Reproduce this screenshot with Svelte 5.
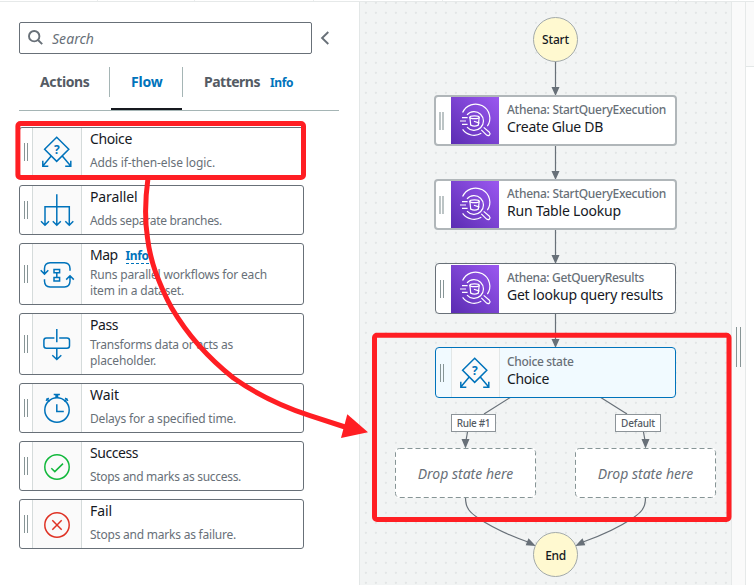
<script>
  const states = [
    { id: 'choice', title: 'Choice', tw: 42, lines: [['Adds if-then-else logic.', 125]] },
    { id: 'parallel', title: 'Parallel', tw: 47.5, lines: [['Adds separate branches.', 132]] },
    { id: 'map', title: 'Map', tw: 27.5, info: true, lines: [['Runs parallel workflows for each', 177], ['item in a dataset.', 94]] },
    { id: 'pass', title: 'Pass', tw: 28, lines: [['Transforms data or acts as', 143], ['placeholder.', 66]] },
    { id: 'wait', title: 'Wait', tw: 29, lines: [['Delays for a specified time.', 146]] },
    { id: 'success', title: 'Success', tw: 48, lines: [['Stops and marks as success.', 151]] },
    { id: 'fail', title: 'Fail', tw: 22, lines: [['Stops and marks as failure.', 146]] }
  ];

  const nodes = [
    { id: 'athena', x: 74, y: 95, w: 243, soft: true, sub: 'Athena: StartQueryExecution', sw: 159, title: 'Create Glue DB', tw: 96 },
    { id: 'athena', x: 74, y: 179, w: 243, soft: true, sub: 'Athena: StartQueryExecution', sw: 159, title: 'Run Table Lookup', tw: 114 },
    { id: 'athena', x: 75, y: 263, w: 241, sub: 'Athena: GetQueryResults', sw: 137, title: 'Get lookup query results', tw: 156 },
    { id: 'choice', x: 75, y: 347, w: 241, active: true, sub: 'Choice state', sw: 66.5, title: 'Choice', tw: 42 }
  ];

  // Tracks a text run so that it spans the given width.
  function fit(el, width) {
    const natural = el.getBoundingClientRect().width;
    el.style.letterSpacing = `${(width - natural) / el.textContent.length}px`;
  }
</script>

{#snippet icon(id)}
  <svg class="icon {id}" viewBox="0 0 48 48" width="48" height="48">
    {#if id === 'choice'}
      <path d="M23.7 9.2 35.8 21.3 23.7 33.4 11.6 21.3ZM18.2 28 9.8 38M9.8 32.8V38.2H15.3M29.3 28 37.7 38M37.8 32.8V38.2H32.2" />
      <text x="23.8" y="25.5" text-anchor="middle">?</text>
    {:else if id === 'parallel'}
      <path d="M23.8 8.3V39.3M12 39V20.8H36.3V39M8 35.3 12 39.3 16 35.3M19.8 35.3 23.8 39.3 27.8 35.3M32.3 35.3 36.3 39.3 40.3 35.3" />
    {:else if id === 'map'}
      <path d="M11.5 24V18.5Q11.7 13 17 12.8H31.5Q36.8 13 37 18.5V20.7M7.7 20.3 11.5 24.1 15.3 20.3M37 26V31.3Q36.8 36.8 31.5 37H17Q11.7 36.8 11.5 31.3V29.3M33.2 29.6 37 25.8 40.8 29.6M21 19.5H26.6V22.8H21ZM21 27.6H26.6V31H21ZM23.8 22.8V27.6" />
    {:else if id === 'pass'}
      <path d="M23.8 9V22.3M21.4 18H13.4Q10.9 18 10.9 20.5V25.8Q10.9 28.3 13.4 28.3H34Q36.5 28.3 36.5 25.8V20.5Q36.5 18 34 18H26.2M23.8 28.3V39.5M19.3 35.2 23.8 39.5 28.3 35.2" />
    {:else if id === 'wait'}
      <circle cx="24" cy="26" r="12.2" />
      <path d="M23.8 20.3V27.4H30.8M20.7 10.4H26.9M13 16.7 15.7 14M32.2 14 35 16.7" />
      <path d="M23.8 10V14" stroke-width="3" />
      <path d="M13.5 14.5 16.5 17.5M34.4 14.5 31.4 17.5" />
    {:else if id === 'success'}
      <circle cx="24" cy="25" r="12.2" />
      <path d="M18.3 26.3 21.8 29.6 30 21.6" />
    {:else if id === 'fail'}
      <circle cx="24" cy="25" r="12.2" />
      <path d="M19.3 20.3 28.7 29.7M28.7 20.3 19.3 29.7" />
    {:else}
      <defs>
        <linearGradient id="violet" x1="0" y1="1" x2="1" y2="0">
          <stop offset="0" stop-color="#5a2cb2" />
          <stop offset="1" stop-color="#9b58f0" />
        </linearGradient>
      </defs>
      <rect width="48" height="48" fill="url(#violet)" stroke="none" />
      <path d="M11.6 15.6A14.2 14.2 0 1 1 36.4 29.2M11.6 32.4A14.2 14.2 0 0 0 30.3 36.3" />
      <path d="M16 17.8A9.4 9.4 0 1 1 16 30.2" />
      <path d="M11 20.6H16.6M9 24H15M11 27.4H16.6" />
      <path d="M18.9 20.3 19.7 28.1Q23.5 30 27.3 28.1L28.2 20.3M22.9 24.2 28.6 26.1" />
      <ellipse cx="23.5" cy="20.2" rx="4.8" ry="1.4" />
      <path d="M30.3 32.8 35.6 38.1Q37.2 39.3 38.5 38Q39.7 36.6 38.4 35.3L32.7 30.4" />
    {/if}
  </svg>
{/snippet}

<div class="app">
  <header class="strip"><i></i><i></i><i></i><i></i><i></i><i></i></header>
  <div class="body">
    <aside>
      <div class="searchrow">
        <div class="search">
          <svg width="16" height="16" viewBox="0 0 16 16"><circle cx="6.2" cy="6.2" r="5.2" /><path d="M10 10 14.2 14.2" /></svg>
          <span use:fit={42}>Search</span>
        </div>
        <svg class="chev" width="9" height="14" viewBox="0 0 9 14"><path d="M8.3 1 2.1 7 8.3 13" /></svg>
      </div>
      <nav>
        <div class="tab first"><span use:fit={49.5}>Actions</span></div>
        <div class="tab on"><span use:fit={31.5}>Flow</span></div>
        <div class="tab last"><span use:fit={56}>Patterns</span><small use:fit={23}>Info</small></div>
      </nav>
      <div class="list">
        {#each states as s}
          <article class:tall={s.lines.length > 1}>
            <div class="grip"><b></b></div>
            <div class="iconcol">{@render icon(s.id)}</div>
            <div class="copy">
              <h3><span use:fit={s.tw}>{s.title}</span>{#if s.info}<a><span use:fit={23}>Info</span></a>{/if}</h3>
              <div class="desc">
                {#each s.lines as [text, width]}
                  <p><span use:fit={width}>{text}</span></p>
                {/each}
              </div>
            </div>
          </article>
        {/each}
      </div>
    </aside>

    <main>
      <svg class="edges" width="371" height="585" viewBox="360 0 371 585">
        <path d="M555.5 61V90M555.5 145V174M555.5 229V258M555.5 313V342M511 397 484 414M600 397 627 414M467.7 431 465.9 441M643.3 431 645.1 441" />
        <path d="M465.5 498C465.5 509 471 513 478 518C490 526 508 535 528 542M645.5 498C645.5 509 640 513 633 518C621 526 603 535 583 542" />
        <path class="head" d="M551.5 87H559.5L555.5 96ZM551.5 171H559.5L555.5 180ZM551.5 255H559.5L555.5 264ZM551.5 339H559.5L555.5 348ZM461.5 439H469.5L465.5 448.5ZM641.5 439H649.5L645.5 448.5ZM528.5 538.2 525.7 545.3 535.8 546ZM582.5 538.2 585.3 545.3 575.2 546Z" />
      </svg>
      <div class="terminal start"><span use:fit={27}>Start</span></div>
      {#each nodes as n}
        <div class="node" class:soft={n.soft} class:active={n.active} style="left:{n.x}px;top:{n.y}px;width:{n.w}px">
          <div class="grip"><b></b></div>
          <div class="nodeicon">{@render icon(n.id)}</div>
          <div class="nodecopy">
            <p><span use:fit={n.sw}>{n.sub}</span></p>
            <h3><span use:fit={n.tw}>{n.title}</span></h3>
          </div>
        </div>
      {/each}
      <div class="tag rule"><span use:fit={33.5}>Rule #1</span></div>
      <div class="tag default"><span use:fit={34}>Default</span></div>
      {#each [35, 215] as left}
        <div class="drop" style="left:{left}px">
          <svg width="141" height="50"><rect x=".5" y=".5" width="140" height="49" rx="4" /></svg>
          <span use:fit={95.5}>Drop state here</span>
        </div>
      {/each}
      <div class="terminal end"><span use:fit={20.5}>End</span></div>
    </main>
    <div class="resize"><b></b></div>
    <div class="inspector"><div></div></div>
  </div>

  <svg class="marks" width="754" height="585">
    <rect x="17.9" y="123.5" width="285.6" height="54" rx="2.5" />
    <rect x="374.5" y="335.2" width="354.5" height="184.3" rx="2.5" />
    <path d="M148 178C145 200 145 222 147.5 238C149 250 152 262 155.5 272C160 284 165 296 171.7 308C187 334 207 357 233.5 378C256 394 281 406 310 415.7L345 427" />
    <path class="tip" d="M347.3 414.3 368 432.3 341 438Z" />
  </svg>
</div>

<style>
  :global(body) { background: #fff; overflow: hidden; }
  .app { position: relative; display: flex; flex-direction: column; width: 754px; height: 585px; overflow: hidden; font-family: "Noto Sans", "Open Sans", sans-serif; color: #16191f; }
  svg { display: block; fill: none; overflow: visible; }
  h3, p { margin: 0; font-weight: 400; }
  span, small { white-space: nowrap; }

  .strip { display: grid; grid-template-columns: 98px 97px 119px 129px 108px 128px; height: 1px; flex: none; border-bottom: 1px solid #e6e9e9; }
  .strip i { border-right: 1px solid #eaeded; }
  .body { display: flex; flex: 1; min-height: 0; }

  aside { box-sizing: border-box; width: 360px; flex: none; padding: 20px 20px 0 19px; border-right: 1px solid #e3e7e7; }
  .searchrow { display: flex; align-items: center; gap: 8px; }
  .search { box-sizing: border-box; display: flex; align-items: center; gap: 8px; width: 293px; height: 32px; padding: 0 8px; border: 1px solid #687078; border-radius: 2px; color: #687078; font-size: 14px; font-style: italic; }
  .search svg, .chev { stroke: #687078; stroke-width: 1.9; }
  nav { box-sizing: border-box; display: flex; height: 57px; padding-top: 13px; border-bottom: 1px solid #a5b5b5; width: 320px; color: #545b64; font-size: 14px; font-weight: 700; }
  .tab { position: relative; display: flex; align-items: center; height: 30px; box-sizing: border-box; line-height: 20px; }
  .tab.first { width: 91px; padding-left: 21px; border-right: 1px solid #a5b5b5; }
  .tab.on { width: 73px; padding-left: 21px; color: #0073bb; border-right: 1px solid #a5b5b5; }
  .tab.on::after { content: ""; position: absolute; left: 1px; right: 0; top: 41px; height: 2px; background: #16191f; }
  .tab.last { padding-left: 21px; gap: 10px; }
  .tab small { color: #0073bb; font-size: 12px; padding-top: 2px; }

  .list { display: flex; flex-direction: column; gap: 8px; margin-top: 16px; width: 285px; }
  article { box-sizing: border-box; display: flex; height: 50px; border: 1px solid #687078; border-radius: 3px; overflow: hidden; background: #fff; }
  article.tall { height: 62px; }
  .grip { width: 12px; flex: none; display: flex; align-items: center; justify-content: center; }
  .grip b { width: 2px; height: 18px; border: solid #879596; border-width: 0 1px; }
  .iconcol { width: 48px; flex: none; display: flex; align-items: center; background: #fafafa; border: solid #d5dbdb; border-width: 0 1px; }
  .icon { stroke: #0073bb; stroke-width: 1.5; flex: none; }
  .icon text { fill: #0073bb; stroke: none; font-size: 12px; font-weight: 700; }
  .icon.success { stroke: #12b83c; }
  .icon.fail { stroke: #df3325; }
  .icon.athena { stroke: #fff; stroke-width: 1.2; }
  .copy { padding-left: 8px; }
  .copy h3 { display: flex; align-items: baseline; gap: 8px; height: 22px; font-size: 14px; line-height: 22px; }
  .copy a { color: #0073bb; font-size: 12px; font-weight: 700; line-height: 14px; border-bottom: 1px dashed #0073bb; }
  .desc { padding-top: 5px; font-size: 12px; line-height: 16px; font-weight: 500; color: #687078; }
  .tall .desc { padding-top: 1px; }

  main { position: relative; width: 371px; flex: none; background: #f2f4f4 radial-gradient(circle at 5.8px 5.7px, #e3e6e6 0.8px, transparent 1.4px) 0 5px / 10px 10px; }
  .edges { position: absolute; left: 0; top: -2px; stroke: #687078; stroke-width: 1.2; }
  .edges .head { fill: #687078; stroke: none; }
  .terminal { position: absolute; box-sizing: border-box; left: 173px; width: 45px; height: 45px; display: flex; align-items: center; justify-content: center; padding-top: 1px; border: 1px solid #a3aaaa; border-radius: 50%; background: #fff9d0; font-size: 12px; font-weight: 500; color: #16191f; }
  .start { top: 14.5px; }
  .end { top: 530px; }
  .node { position: absolute; box-sizing: border-box; display: flex; height: 51px; margin-top: -2px; border: 1px solid #687078; border-radius: 4px; overflow: hidden; background: #fff; }
  .node.soft { border-width: 2px; border-color: #b0b6b9; }
  .node .grip { width: 15px; justify-content: flex-start; padding-left: 4px; box-sizing: border-box; }
  .node.soft .grip { padding-left: 3px; }
  .node.soft .grip b { border-color: #bcc4c5; border-width: 0 2px; width: 1px; }
  .node.active { border-color: #0073bb; background: #f1faff; }
  .nodeicon { width: 48px; flex: none; display: flex; align-items: center; }
  .active .nodeicon { box-sizing: border-box; width: 49px; background: #fafafa; border: solid #e3e7e7; border-width: 0 1px; }
  .active .nodeicon .icon { margin-left: -1px; }
  .nodecopy { padding: 5px 0 0 8px; }
  .soft .nodecopy { padding-top: 4px; }
  .active .nodecopy { padding-left: 7px; }
  .nodecopy p { font-size: 12px; line-height: 17px; font-weight: 500; color: #687078; }
  .nodecopy h3 { font-size: 14px; line-height: 18px; }
  .tag { position: absolute; box-sizing: border-box; top: 412px; width: 45px; height: 18px; display: flex; align-items: center; justify-content: center; border: 1px solid #8d9499; background: #fff; color: #545b64; font-size: 10px; font-weight: 500; }
  .rule { left: 91px; }
  .default { left: 255px; width: 46px; }
  .drop { position: absolute; top: 446px; width: 141px; height: 50px; display: flex; align-items: center; justify-content: center; border-radius: 4px; background: #fff; font-size: 14px; font-style: italic; color: #687078; }
  .drop svg { position: absolute; inset: 0; stroke: #879596; stroke-dasharray: 5 3; }

  .resize { box-sizing: border-box; width: 15px; flex: none; background: #fafafa; border: solid #e6e9e9; border-width: 0 1px; display: flex; padding: 325px 0 0 4px; }
  .resize b { width: 3px; height: 40px; border: solid #879596; border-width: 0 1px; }
  .inspector { flex: 1; background: #fff; }
  .inspector div { height: 64px; background: #fafafa; border-bottom: 1px solid #e3e7e7; }

  .marks { position: absolute; inset: 0; pointer-events: none; stroke: #ff1e23; stroke-width: 5; }
  .marks .tip { fill: #ff1e23; stroke: none; }
</style>
